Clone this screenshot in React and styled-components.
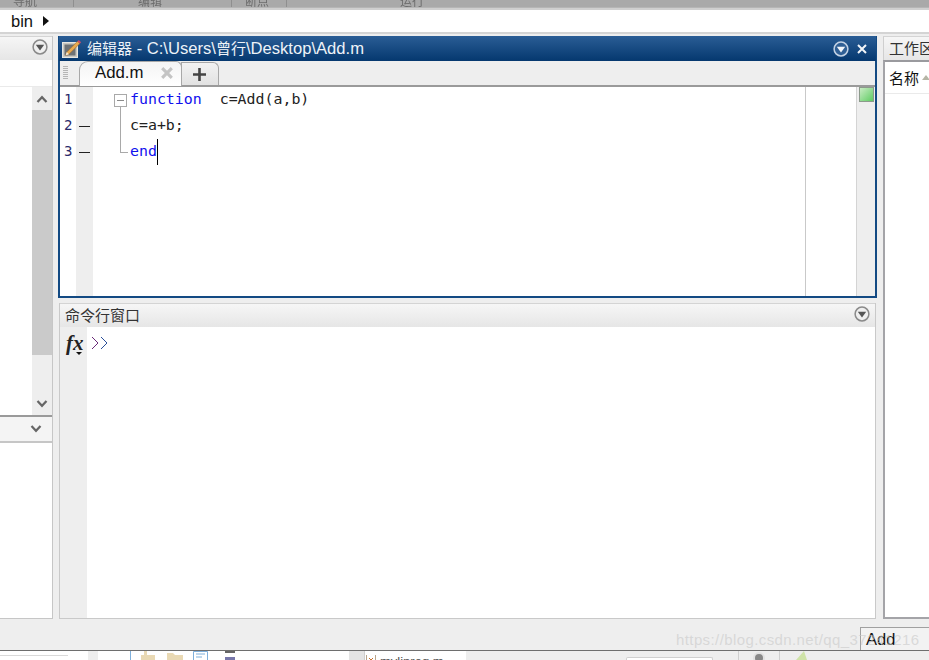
import React from "react";
import styled, { createGlobalStyle } from "styled-components";

const cjk = `"Liberation Sans", "Noto Sans CJK SC", sans-serif`;

const Global = createGlobalStyle`
  html, body { margin: 0; padding: 0; background: #eeeeee; overflow: hidden; }
  * { box-sizing: border-box; }
  body { font-family: ${cjk}; }
`;

const Page = styled.div`
  position: relative;
  width: 929px;
  height: 660px;
  display: flex;
  flex-direction: column;
  overflow: hidden;
`;

const Ribbon = styled.div`
  height: 8px;
  flex: none;
  display: flex;
  background: #a9a9a9;
  overflow: hidden;
  border-bottom: 1px solid #b5b5b5;
`;

const RibbonGroup = styled.div`
  width: ${(p) => p.$w}px;
  flex: none;
  padding-left: ${(p) => p.$pad}px;
  border-right: 1px solid ${(p) => (p.$plain ? "transparent" : "#8f8f8f")};
  display: flex;
  align-items: flex-end;
  font-size: 12px;
  line-height: 8px;
  color: #6c6c6c;
  overflow: hidden;
  span {
    display: block;
    transform: translateY(-1px);
    filter: blur(0.3px);
  }
`;

const Crumbs = styled.div`
  height: 26px;
  flex: none;
  background: #fff;
  border-top: 2px solid #cfcfcf;
  border-bottom: 2px solid #d4d4d4;
  display: flex;
  align-items: center;
  gap: 10px;
  padding-left: 11px;
  font-size: 16.5px;
  color: #111;
`;

const CrumbArrow = styled.span`
  width: 0;
  height: 0;
  border-left: 6px solid #111;
  border-top: 5px solid transparent;
  border-bottom: 5px solid transparent;
`;

const Workspace = styled.div`
  flex: 1;
  display: grid;
  grid-template-columns: 53px 819px 46px;
  column-gap: 5px;
  padding-top: 2px;
  min-height: 0;
`;

const LeftPanel = styled.div`
  display: flex;
  flex-direction: column;
  background: #fff;
  border-right: 1px solid #c6c6c6;
  border-bottom: 1px solid #c6c6c6;
`;

const RightPanel = styled.div`
  display: flex;
  flex-direction: column;
  margin-left: 1px;
  width: 46px;
`;

const PanelHead = styled.div`
  height: 24px;
  flex: none;
  display: flex;
  align-items: center;
  justify-content: ${(p) => p.$justify || "space-between"};
  padding: 0 ${(p) => p.$right || 5}px 3px 5px;
  background: linear-gradient(#f6f6f6, #e6e6e6);
  border-top: 1px solid #d4d4d4;
  border-left: ${(p) => (p.$edge ? "1px solid #cfcfcf" : "none")};
  font-size: 15px;
  color: #333;
  white-space: nowrap;
  overflow: hidden;
`;

const LeftTop = styled.div`
  height: 27px;
  flex: none;
  background: #fff;
  border-bottom: 1px solid #eaeaea;
`;

const ListArea = styled.div`
  height: 330px;
  flex: none;
  display: flex;
  justify-content: flex-end;
  border-bottom: 2px solid #9a9a9a;
`;

const Scrollbar = styled.div`
  width: 20px;
  background: #eeeeee;
  display: flex;
  flex-direction: column;
  align-items: center;
`;

const ScrollButton = styled.div`
  height: 23px;
  flex: none;
  display: flex;
  align-items: center;
  justify-content: center;
`;

const ScrollThumb = styled.div`
  width: 20px;
  height: 245px;
  flex: none;
  background: #cacaca;
`;

const ScrollGap = styled.div`
  flex: 1;
`;

const Collapsed = styled.div`
  height: 26px;
  flex: none;
  display: flex;
  align-items: center;
  justify-content: flex-end;
  padding-right: 10px;
  background: #f4f4f4;
  border-bottom: 2px solid #c6c6c6;
`;

const Center = styled.div`
  display: flex;
  flex-direction: column;
  gap: 5px;
  min-height: 0;
`;

const Editor = styled.div`
  height: 262px;
  flex: none;
  display: flex;
  flex-direction: column;
  border: 2px solid #134a83;
  border-top: 0;
  background: #fff;
`;

const TitleBar = styled.div`
  height: 25px;
  flex: none;
  margin: 0 -1px;
  display: flex;
  align-items: center;
  gap: 5px;
  padding: 0 9px 0 3px;
  background: linear-gradient(#2a5d95, #05386f);
  color: #eef3f8;
  font-size: 16.6px;
`;

const TitleText = styled.div`
  flex: 1;
  white-space: nowrap;
  margin-top: -2px;
`;

const TitleCjk = styled.span`
  font-size: 15px;
`;

const TitleTools = styled.div`
  display: flex;
  align-items: center;
  gap: 8px;
`;

const TabBar = styled.div`
  height: 26px;
  flex: none;
  display: flex;
  align-items: flex-end;
  padding-left: 3px;
  background: #eeeeee;
  border-bottom: 2px solid #9a9a9a;
`;

const Grip = styled.div`
  width: 5px;
  height: 14px;
  margin: 0 11px 5px 0;
  background: repeating-linear-gradient(#b5b5b5 0 1px, transparent 1px 2px);
`;

const Tab = styled.div`
  height: 25px;
  width: 103px;
  margin-bottom: -1px;
  display: flex;
  align-items: center;
  justify-content: space-between;
  padding: 0 8px 2px 15px;
  background: linear-gradient(#f4f4f4, #ffffff);
  border: 1px solid #a8a8a8;
  border-bottom: 0;
  border-radius: 9px 6px 0 0;
  font-size: 16.8px;
  color: #111;
  position: relative;
  z-index: 1;
`;

const AddTab = styled.div`
  height: 23px;
  width: 38px;
  margin-left: -1px;
  display: flex;
  align-items: center;
  justify-content: center;
  padding-right: 2px;
  background: linear-gradient(#f2f2f2, #e2e2e2);
  border: 1px solid #a8a8a8;
  border-bottom: 0;
  border-radius: 0 6px 0 0;
`;

const EditorBody = styled.div`
  flex: 1;
  display: grid;
  grid-template-columns: 16px 17px 713px 50px 19px;
  min-height: 0;
`;

const LineNumbers = styled.div`
  background: #fff;
`;

const LineNumber = styled.div`
  height: 26px;
  line-height: 24px;
  padding-left: 4px;
  font-family: "DejaVu Sans Mono", monospace;
  font-size: 14px;
  color: #2a2a6a;
`;

const Breakpoints = styled.div`
  background: #eeeeee;
`;

const DashCell = styled.div`
  height: 26px;
  display: flex;
  align-items: center;
  justify-content: center;
  &::after {
    content: "";
    display: ${(p) => (p.$on ? "block" : "none")};
    width: 11px;
    height: 1px;
    background: #222;
  }
`;

const Code = styled.div`
  position: relative;
  padding-left: 37px;
  border-right: 1px solid #c9c9c9;
`;

const CodeLine = styled.div`
  height: 26px;
  line-height: 24px;
  font-family: "DejaVu Sans Mono", monospace;
  font-size: 14.9px;
  white-space: pre;
  color: #222;
`;

const Keyword = styled.span`
  color: #1111ee;
`;

const Caret = styled.span`
  position: absolute;
  width: 1px;
  height: 26px;
  background: #000;
`;

const FoldBox = styled.div`
  position: absolute;
  left: 21px;
  top: 7px;
  width: 13px;
  height: 13px;
  border: 1px solid #a9a9a9;
  background: #fff;
  &::before {
    content: "";
    position: absolute;
    left: 2px;
    top: 5px;
    width: 7px;
    height: 1px;
    background: #8a8a8a;
  }
`;

const FoldLine = styled.div`
  position: absolute;
  left: 27px;
  top: 20px;
  width: 8px;
  height: 46px;
  border-left: 1px solid #a9a9a9;
  border-bottom: 1px solid #a9a9a9;
`;

const OverviewGap = styled.div`
  background: #fff;
`;

const Overview = styled.div`
  background: #eeeeee;
  border-left: 1px solid #d4d4d4;
  padding-left: 2px;
`;

const StatusMark = styled.div`
  width: 15px;
  height: 15px;
  background: linear-gradient(135deg, #c9ecc4, #5fcc63);
  border: 1px solid #8c9a8c;
`;

const Command = styled.div`
  flex: 1;
  display: flex;
  flex-direction: column;
  margin: 0 1px;
  border: 1px solid #c9c9c9;
  border-top: 0;
  background: #fff;
  min-height: 0;
`;

const CommandBody = styled.div`
  flex: 1;
  display: flex;
  min-height: 0;
`;

const FxGutter = styled.div`
  width: 27px;
  flex: none;
  background: #eeeeee;
  position: relative;
  padding: 4px 0 0 6px;
  font-family: "Liberation Serif", serif;
  font-style: italic;
  font-weight: 700;
  font-size: 21px;
  line-height: 24px;
  color: #222;
  &::after {
    content: "";
    position: absolute;
    left: 16px;
    top: 25px;
    border-top: 3px solid #111;
    border-left: 3.5px solid transparent;
    border-right: 3.5px solid transparent;
  }
`;

const Prompt = styled.div`
  padding: 9px 0 0 4px;
`;

const RightBody = styled.div`
  flex: 1;
  background: #fff;
  border-left: 2px solid #a4a4a8;
  border-top: 2px solid #9a9a9e;
  border-bottom: 2px solid #a4a4a8;
`;

const NameRow = styled.div`
  height: 32px;
  display: flex;
  align-items: center;
  gap: 3px;
  padding-left: 4px;
  border-bottom: 1px solid #eaeaea;
  font-size: 15px;
  color: #111;
  white-space: nowrap;
  overflow: hidden;
`;

const SortArrow = styled.span`
  border-bottom: 5px solid #b5b5a5;
  border-left: 4px solid transparent;
  border-right: 4px solid transparent;
`;

const StatusBar = styled.div`
  height: 31px;
  flex: none;
  display: flex;
  justify-content: flex-end;
  align-items: flex-end;
  background: #eeeeee;
`;

const FuncBox = styled.div`
  width: 69px;
  height: 23px;
  padding: 2px 0 0 5px;
  border-left: 1px solid #a0a0a0;
  border-top: 1px solid #a0a0a0;
  background: #f2f2f2;
  font-size: 16.5px;
  color: #111;
`;

const Watermark = styled.div`
  position: absolute;
  left: 676px;
  top: 631px;
  font-size: 15px;
  letter-spacing: 0.4px;
  color: rgba(200, 200, 200, 0.6);
  white-space: nowrap;
`;

const Dock = styled.div`
  height: 10px;
  flex: none;
  display: flex;
  background: #fff;
  border-top: 1px solid #6e6e6e;
  overflow: hidden;
`;

const DockCell = styled.div`
  width: ${(p) => p.$w}px;
  flex: none;
  height: 100%;
  background: ${(p) => p.$bg || "#fff"};
  border-left: ${(p) => (p.$edge ? `1px solid ${p.$edge}` : "none")};
  overflow: hidden;
`;

const DockFile = styled.div`
  display: flex;
  align-items: flex-start;
  gap: 4px;
  padding: 4px 0 0 1px;
  font-size: 13px;
  line-height: 13px;
  color: #555;
  white-space: nowrap;
`;

const DockRule = styled.div`
  margin-top: 4px;
  height: 1px;
  background: #d9d9d9;
`;

const DockField = styled.div`
  margin-top: 6px;
  height: 4px;
  background: #fff;
  border: 1px solid #d0d0d0;
  border-bottom: 0;
  border-radius: 2px 2px 0 0;
`;

const DockIcon = styled.svg`
  display: block;
  margin-left: ${(p) => p.$left || 0}px;
`;

function CircleMenu({ light }) {
  const stroke = light ? "#c3d2e4" : "#8a8a8a";
  const tri = light ? "#f1f5f9" : "#555";
  return (
    <svg width="16" height="16" viewBox="0 0 16 16">
      <circle cx="8" cy="8" r="6.9" fill={light ? "#2f5f95" : "#efefef"} stroke={stroke} strokeWidth="1.5" />
      <path d="M3.8 5.8h8.4L8 11.4z" fill={tri} />
    </svg>
  );
}

function Chevron({ up, size = 12, color = "#666" }) {
  return (
    <svg width={size} height="8" viewBox="0 0 12 8">
      <path d={up ? "M1.5 7L6 2.2 10.5 7" : "M1.5 1L6 5.8 10.5 1"} fill="none" stroke={color} strokeWidth="2.2" />
    </svg>
  );
}

function EditorIcon() {
  return (
    <svg width="20" height="20" viewBox="0 0 20 20">
      <rect x="0.5" y="3.5" width="15" height="15" fill="#c9c7c0" stroke="#e6e6e2" />
      <rect x="2.5" y="5.5" width="11" height="11" fill="#6d7276" />
      <path d="M3.5 16.5l1.2-3.4L15.6 2.2l2.4 2.2L7 15.2z" fill="#e8a94e" stroke="#8a5a24" strokeWidth="0.5" />
      <path d="M15.6 2.2l1.2-1.2 2.3 2.2-1.1 1.2z" fill="#d0486a" />
      <path d="M3.5 16.5l1.2-3.4 2.3 2.1z" fill="#f4e8d2" />
    </svg>
  );
}

function CloseX({ color, size = 10, width = 2 }) {
  return (
    <svg width={size} height={size} viewBox="0 0 10 10">
      <path d="M1 1l8 8M9 1l-8 8" stroke={color} strokeWidth={width} />
    </svg>
  );
}

function Plus() {
  return (
    <svg width="13" height="13" viewBox="0 0 13 13">
      <path d="M6.5 0v13M0 6.5h13" stroke="#444" strokeWidth="2.6" />
    </svg>
  );
}

function PromptMark() {
  return (
    <svg width="18" height="14" viewBox="0 0 18 14">
      <path d="M1 1l6 6-6 6" fill="none" stroke="#6a2a78" strokeWidth="1" />
      <path d="M10 1l6 6-6 6" fill="none" stroke="#2a4f9a" strokeWidth="1" />
    </svg>
  );
}

export default function App() {
  return (
    <Page>
      <Global />
      <Ribbon>
        <RibbonGroup $w={74} $pad={13}><span>导航</span></RibbonGroup>
        <RibbonGroup $w={158} $pad={64}><span>编辑</span></RibbonGroup>
        <RibbonGroup $w={55} $pad={13}><span>断点</span></RibbonGroup>
        <RibbonGroup $w={250} $pad={113} $plain><span>运行</span></RibbonGroup>
      </Ribbon>
      <Crumbs>
        bin
        <CrumbArrow />
      </Crumbs>
      <Workspace>
        <LeftPanel>
          <PanelHead $justify="flex-end" $right={4}>
            <CircleMenu />
          </PanelHead>
          <LeftTop />
          <ListArea>
            <Scrollbar>
              <ScrollButton><Chevron up /></ScrollButton>
              <ScrollThumb />
              <ScrollGap />
              <ScrollButton><Chevron /></ScrollButton>
            </Scrollbar>
          </ListArea>
          <Collapsed><Chevron /></Collapsed>
        </LeftPanel>
        <Center>
          <Editor>
            <TitleBar>
              <EditorIcon />
              <TitleText>
                <TitleCjk>编辑器</TitleCjk> - C:\Users\<TitleCjk>曾行</TitleCjk>\Desktop\Add.m
              </TitleText>
              <TitleTools>
                <CircleMenu light />
                <CloseX color="#f2f5f8" />
              </TitleTools>
            </TitleBar>
            <TabBar>
              <Grip />
              <Tab>
                Add.m
                <CloseX color="#c4c4c4" size={12} width={2.6} />
              </Tab>
              <AddTab><Plus /></AddTab>
            </TabBar>
            <EditorBody>
              <LineNumbers>
                <LineNumber>1</LineNumber>
                <LineNumber>2</LineNumber>
                <LineNumber>3</LineNumber>
              </LineNumbers>
              <Breakpoints>
                <DashCell />
                <DashCell $on />
                <DashCell $on />
              </Breakpoints>
              <Code>
                <FoldBox />
                <FoldLine />
                <CodeLine><Keyword>function</Keyword>  c=Add(a,b)</CodeLine>
                <CodeLine>c=a+b;</CodeLine>
                <CodeLine><Keyword>end</Keyword><Caret /></CodeLine>
              </Code>
              <OverviewGap />
              <Overview>
                <StatusMark />
              </Overview>
            </EditorBody>
          </Editor>
          <Command>
            <PanelHead>
              命令行窗口
              <CircleMenu />
            </PanelHead>
            <CommandBody>
              <FxGutter>fx</FxGutter>
              <Prompt><PromptMark /></Prompt>
            </CommandBody>
          </Command>
        </Center>
        <RightPanel>
          <PanelHead $edge>工作区</PanelHead>
          <RightBody>
            <NameRow>
              名称
              <SortArrow />
            </NameRow>
          </RightBody>
        </RightPanel>
      </Workspace>
      <StatusBar>
        <FuncBox>Add</FuncBox>
      </StatusBar>
      <Watermark>https://blog.csdn.net/qq_37241216</Watermark>
      <Dock>
        <DockCell $w={68}><DockRule /></DockCell>
        <DockCell $w={20} />
        <DockCell $w={10} $bg="#eeeeee" />
        <DockCell $w={32} />
        <DockCell $w={78} $edge="#7fb0dc">
          <DockIcon width="77" height="9" viewBox="0 0 77 9">
            <path d="M10 9V4h3V0h3v4h8v5z" fill="#e9d9b4" />
            <path d="M36 9V2h6l2 2h8v5z" fill="#e9d9b4" />
            <path d="M62.5.5h14v9h-14zM65 3h9M65 6h6" fill="#fff" stroke="#7fb0dc" />
          </DockIcon>
        </DockCell>
        <DockCell $w={13} />
        <DockCell $w={128}>
          <DockIcon $left={4} width="11" height="9" viewBox="0 0 11 9">
            <path d="M0 0h10v2H0z" fill="#666" />
            <path d="M0 6h10v3H0z" fill="#7777aa" />
          </DockIcon>
        </DockCell>
        <DockCell $w={15} $bg="#e4e4e4" />
        <DockCell $w={102} $edge="#cfcfcf">
          <DockFile>
            <DockIcon width="10" height="9" viewBox="0 0 10 9">
              <path d="M.5 0v9h9V0" fill="#fff" stroke="#b9a58c" />
              <path d="M3 3l4 4M7 3L3 7" stroke="#c7702c" />
            </DockIcon>
            mylinreg.m
          </DockFile>
        </DockCell>
        <DockCell $w={160} $bg="#eeeeee" />
        <DockCell $w={87} $bg="#eeeeee"><DockField /></DockCell>
        <DockCell $w={25} $bg="#eeeeee" />
        <DockCell $w={41} $bg="#eeeeee" $edge="#cfcfcf">
          <DockIcon $left={12} width="16" height="9" viewBox="0 0 16 9">
            <circle cx="8" cy="7" r="6" fill="#e2e2e2" />
            <circle cx="8" cy="7" r="4" fill="#888" />
          </DockIcon>
        </DockCell>
        <DockCell $w={43} $bg="#eeeeee" $edge="#cfcfcf">
          <DockIcon $left={14} width="18" height="9" viewBox="0 0 18 9">
            <path d="M2 9l8-9 3 9z" fill="#cfe3a8" />
          </DockIcon>
        </DockCell>
        <DockCell $w={107} $bg="#eeeeee" />
      </Dock>
    </Page>
  );
}
